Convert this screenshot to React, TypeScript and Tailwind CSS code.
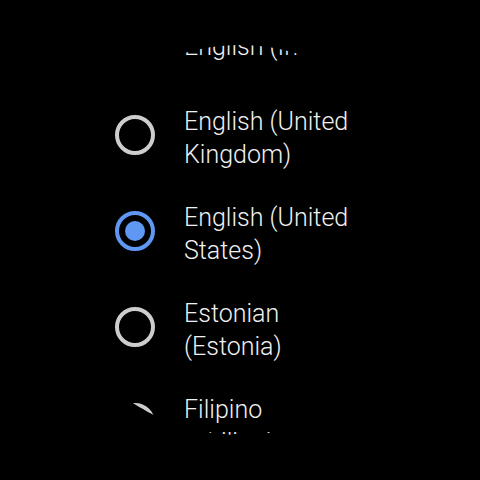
import React from 'react';

interface Locale {
  id: string;
  label: string;
}

const locales: Locale[] = [
  { id: 'en-GB', label: 'English (United Kingdom)' },
  { id: 'en-US', label: 'English (United States)' },
  { id: 'et-EE', label: 'Estonian (Estonia)' },
  { id: 'fil-PH', label: 'Filipino (Philippines)' },
];

function Radio({ checked }: { checked: boolean }) {
  return checked ? (
    <span className="flex h-10 w-10 shrink-0 items-center justify-center rounded-full border-[4px] border-[#5f98f2]">
      <span className="h-5 w-5 rounded-full bg-[#5f98f2]" />
    </span>
  ) : (
    <span className="h-10 w-10 shrink-0 rounded-full border-[4px] border-[#cdcdcd]" />
  );
}

export default function App() {
  const selected = 'en-US';

  return (
    <div className="flex h-[480px] w-[480px] items-center justify-center bg-black">
      <div className="h-[390px] w-[390px] overflow-hidden rounded-full bg-black">
        <div
          className="-mt-[19px] flex flex-col pl-[70px] text-[25px] font-light leading-[33px] text-[#f0f0f0]"
          style={{ fontFamily: 'Roboto, "Noto Sans", sans-serif' }}
        >
          <div className="mb-[21px] flex items-center gap-[29px]">
            <Radio checked={false} />
            <span>English (India)</span>
          </div>
          {locales.map((l) => (
            <div key={l.id} className="flex items-center gap-[29px] py-[15px]">
              <Radio checked={l.id === selected} />
              <span className="w-[185px] translate-y-[3px]">{l.label}</span>
            </div>
          ))}
        </div>
      </div>
    </div>
  );
}
